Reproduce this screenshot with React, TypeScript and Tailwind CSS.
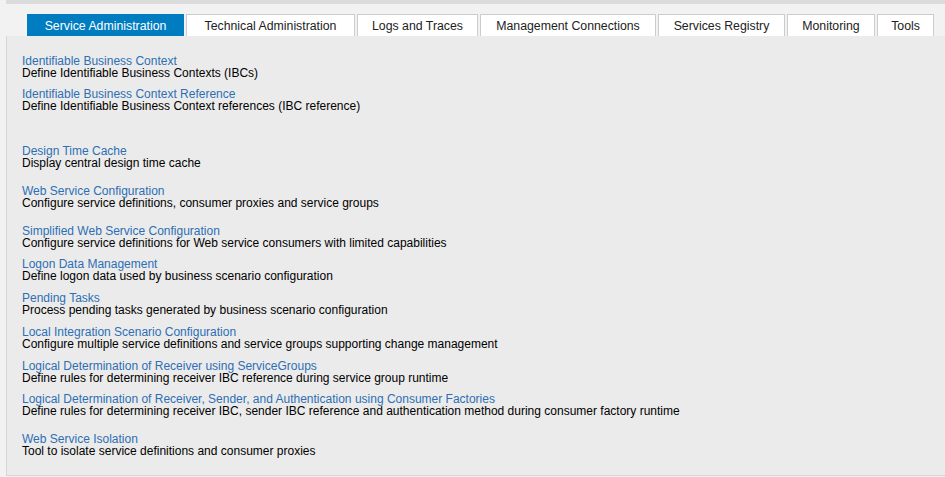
import React from "react";

const tabs = [
  { label: "Service Administration", w: "w-[157px]", active: true },
  { label: "Technical Administration", w: "w-[169px]" },
  { label: "Logs and Traces", w: "w-[121px]" },
  { label: "Management Connections", w: "w-[176px]" },
  { label: "Services Registry", w: "w-[127px]" },
  { label: "Monitoring", w: "w-[88px]" },
  { label: "Tools", w: "w-[57px]" },
];

const items = [
  { t: "Identifiable Business Context", d: "Define Identifiable Business Contexts (IBCs)", m: "mt-0" },
  { t: "Identifiable Business Context Reference", d: "Define Identifiable Business Context references (IBC reference)", m: "mt-[9px]" },
  { t: "Design Time Cache", d: "Display central design time cache", m: "mt-[33px]" },
  { t: "Web Service Configuration", d: "Configure service definitions, consumer proxies and service groups", m: "mt-[16px]" },
  { t: "Simplified Web Service Configuration", d: "Configure service definitions for Web service consumers with limited capabilities", m: "mt-[16px]" },
  { t: "Logon Data Management", d: "Define logon data used by business scenario configuration", m: "mt-[9px]" },
  { t: "Pending Tasks", d: "Process pending tasks generated by business scenario configuration", m: "mt-[10px]" },
  { t: "Local Integration Scenario Configuration", d: "Configure multiple service definitions and service groups supporting change management", m: "mt-[10px]" },
  { t: "Logical Determination of Receiver using ServiceGroups", d: "Define rules for determining receiver IBC reference during service group runtime", m: "mt-[10px]" },
  { t: "Logical Determination of Receiver, Sender, and Authentication using Consumer Factories", d: "Define rules for determining receiver IBC, sender IBC reference and authentication method during consumer factory runtime", m: "mt-[9px]" },
  { t: "Web Service Isolation", d: "Tool to isolate service definitions and consumer proxies", m: "mt-[16px]" },
];

export default function App() {
  return (
    <div className="w-[945px] h-[477px] bg-[#f2f2f2] overflow-hidden" style={{ fontFamily: '"Liberation Sans", Arial, sans-serif' }}>
      <div className="ml-[6px] h-[4px] bg-[#dcdcdc]" />
      <div className="flex gap-[2px] pl-[27px] mt-[10px] h-[22px]">
        {tabs.map((tab) =>
          tab.active ? (
            <div key={tab.label} className={`${tab.w} h-[22px] pt-[2px] bg-[#007cc0] text-white text-[12.3px] flex items-center justify-center shrink-0`}>
              {tab.label}
            </div>
          ) : (
            <div key={tab.label} className={`${tab.w} h-[22px] pt-[2px] bg-white border border-b-0 border-[#cccccc] text-[#222222] text-[12.3px] flex items-center justify-center shrink-0`}>
              {tab.label}
            </div>
          )
        )}
      </div>
      <div className="ml-[6px] h-[440px] bg-[#ebebeb] border-l border-b border-[#d6d6d6] pt-[19px] pl-[15px]">
        {items.map((it) => (
          <div key={it.t} className={`${it.m} text-[12px] leading-[12px]`}>
            <div className="text-[#2d6fb4] h-[12px]">{it.t}</div>
            <div className="text-black h-[12px]">{it.d}</div>
          </div>
        ))}
      </div>
    </div>
  );
}
